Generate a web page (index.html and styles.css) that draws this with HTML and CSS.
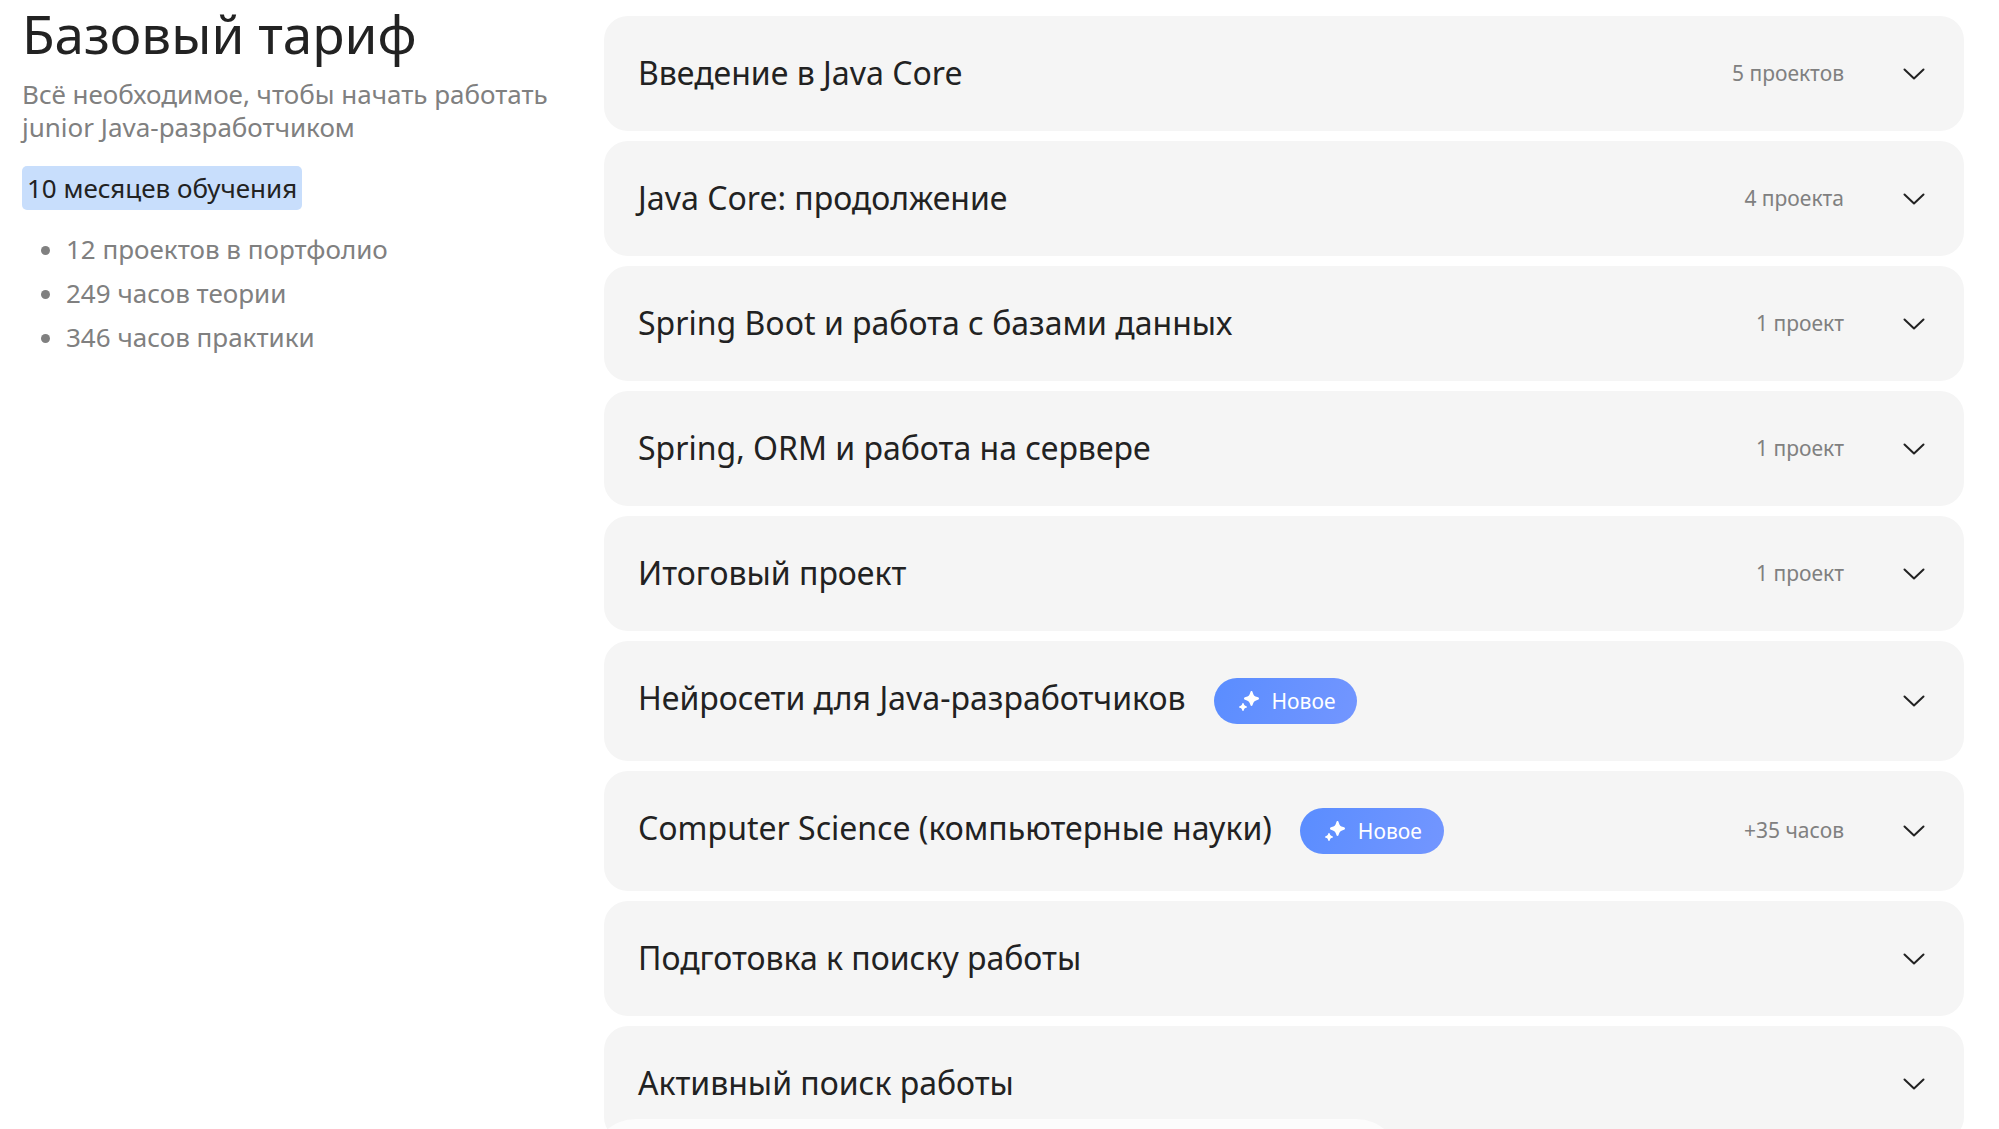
FILE: index.html
```html
<!DOCTYPE html>
<html lang="ru">
  <head>
    <meta charset="UTF-8" />
    <meta name="viewport" content="width=device-width, initial-scale=1.0" />
    <title>Базовый тариф</title>
    <link rel="stylesheet" href="styles.css">
  </head>
  <body>
    <svg class="sprite" aria-hidden="true">
      <symbol id="chevron" viewBox="0 0 24 24">
        <path d="M2.500 7.500 12 16.500l9.500-9" fill="none" stroke="currentColor" stroke-width="2" stroke-linecap="round" stroke-linejoin="round" />
      </symbol>
      <symbol id="sparkle" viewBox="0 0 20 20">
        <path d="M12.500 0c.8 0 1 .7 1.300 1.700.8 2.700 1.700 3.600 4.500 4.400 1 .3 1.700.6 1.700 1.400s-.7 1.100-1.700 1.400c-2.800.8-3.700 1.700-4.500 4.400-.3 1-.5 1.700-1.300 1.700s-1-.7-1.300-1.700c-.8-2.700-1.700-3.600-4.500-4.400-1-.3-1.700-.6-1.700-1.400s.7-1.100 1.700-1.400c2.800-.8 3.700-1.700 4.500-4.400.3-1 .5-1.700 1.300-1.700z" fill="currentColor" />
        <path d="M4 12c.5 0 .7.400.8.800.4 1.500.9 2 2.400 2.400.5.100.8.300.8.800s-.3.700-.8.800c-1.500.4-2 .9-2.400 2.400-.1.400-.3.800-.8.800s-.7-.4-.8-.8c-.4-1.500-.9-2-2.400-2.400-.5-.1-.8-.3-.8-.8s.3-.7.8-.8c1.500-.4 2-.9 2.400-2.400.1-.4.300-.8.800-.8z" fill="currentColor" />
      </symbol>
    </svg>

    <main class="program">
      <section class="tariff">
        <h1>Базовый тариф</h1>
        <p class="tariff-text">Всё необходимое, чтобы начать работать junior Java-разработчиком</p>
        <p class="duration">10 месяцев обучения</p>
        <ul class="facts">
          <li>12 проектов в портфолио</li>
          <li>249 часов теории</li>
          <li>346 часов практики</li>
        </ul>
      </section>

      <section class="modules">
        <button type="button" class="module" aria-expanded="false">
          <span class="module-title">Введение в Java Core</span>
          <span class="module-meta">5 проектов</span>
          <svg class="chevron"><use href="#chevron" /></svg>
        </button>
        <button type="button" class="module" aria-expanded="false">
          <span class="module-title">Java Core: продолжение</span>
          <span class="module-meta">4 проекта</span>
          <svg class="chevron"><use href="#chevron" /></svg>
        </button>
        <button type="button" class="module" aria-expanded="false">
          <span class="module-title">Spring Boot и работа с базами данных</span>
          <span class="module-meta">1 проект</span>
          <svg class="chevron"><use href="#chevron" /></svg>
        </button>
        <button type="button" class="module" aria-expanded="false">
          <span class="module-title">Spring, ORM и работа на сервере</span>
          <span class="module-meta">1 проект</span>
          <svg class="chevron"><use href="#chevron" /></svg>
        </button>
        <button type="button" class="module" aria-expanded="false">
          <span class="module-title">Итоговый проект</span>
          <span class="module-meta">1 проект</span>
          <svg class="chevron"><use href="#chevron" /></svg>
        </button>
        <button type="button" class="module" aria-expanded="false">
          <span class="module-title">
            Нейросети для Java-разработчиков
            <span class="badge"><svg class="sparkle"><use href="#sparkle" /></svg>Новое</span>
          </span>
          <svg class="chevron"><use href="#chevron" /></svg>
        </button>
        <button type="button" class="module" aria-expanded="false">
          <span class="module-title">
            Computer Science (компьютерные науки)
            <span class="badge"><svg class="sparkle"><use href="#sparkle" /></svg>Новое</span>
          </span>
          <span class="module-meta">+35 часов</span>
          <svg class="chevron"><use href="#chevron" /></svg>
        </button>
        <button type="button" class="module" aria-expanded="false">
          <span class="module-title">Подготовка к поиску работы</span>
          <svg class="chevron"><use href="#chevron" /></svg>
        </button>
        <button type="button" class="module" aria-expanded="false">
          <span class="module-title">Активный поиск работы</span>
          <svg class="chevron"><use href="#chevron" /></svg>
        </button>
      </section>
    </main>

    <div class="bottom-bar"></div>
  </body>
</html>
```
FILE: styles.css
```css
* {
  box-sizing: border-box;
}
html {
  scrollbar-width: none;
}
body {
  margin: 0;
  background: #fff;
  color: #222;
  font-family: "Noto Sans", sans-serif;
}
.sprite {
  position: absolute;
  width: 0;
  height: 0;
}
.program {
  display: grid;
  grid-template-columns: 548px 1fr;
  gap: 34px;
  padding: 0 35px 0 22px;
}
h1 {
  margin: 0;
  font-size: 53px;
  font-weight: 400;
  line-height: 68px;
}
.tariff-text {
  margin: 10px 0 22px;
  color: #808080;
  font-size: 26px;
  line-height: 33px;
}
.duration {
  display: inline-block;
  margin: 0;
  padding: 0 5px;
  border-radius: 5px;
  background: #c8defc;
  font-size: 26px;
  line-height: 44px;
}
.facts {
  margin: 17px 0 0;
  padding-left: 44px;
  color: #808080;
  font-size: 26px;
  line-height: 44px;
}
.modules {
  display: flex;
  flex-direction: column;
  gap: 10px;
  padding-top: 16px;
}
.module {
  display: flex;
  align-items: center;
  padding: 35px 38px 35px 34px;
  border: none;
  border-radius: 24px;
  background: #f5f5f5;
  color: #222;
  font-family: inherit;
  text-align: left;
  cursor: pointer;
}
.module-title {
  display: flex;
  flex: 1;
  align-items: flex-start;
  gap: 28px;
  padding-bottom: 2px;
  font-size: 32px;
  line-height: 43px;
}
.module-meta {
  padding-bottom: 2px;
  color: #808080;
  font-size: 21px;
  line-height: 30px;
}
.chevron {
  width: 24px;
  height: 24px;
  margin-left: 58px;
}
.badge {
  display: flex;
  align-items: center;
  gap: 13px;
  height: 46px;
  margin-top: 2px;
  padding: 0 22px 0 25px;
  border-radius: 23px;
  background: linear-gradient(110deg, #5a8dff, #7396ff);
  color: #fff;
  font-size: 21px;
}
.sparkle {
  width: 20px;
  height: 20px;
}
.bottom-bar {
  position: fixed;
  bottom: -80px;
  left: 50%;
  width: 808px;
  height: 90px;
  margin-left: -408px;
  border-radius: 44px;
  background: #fcfcfc;
}
```
